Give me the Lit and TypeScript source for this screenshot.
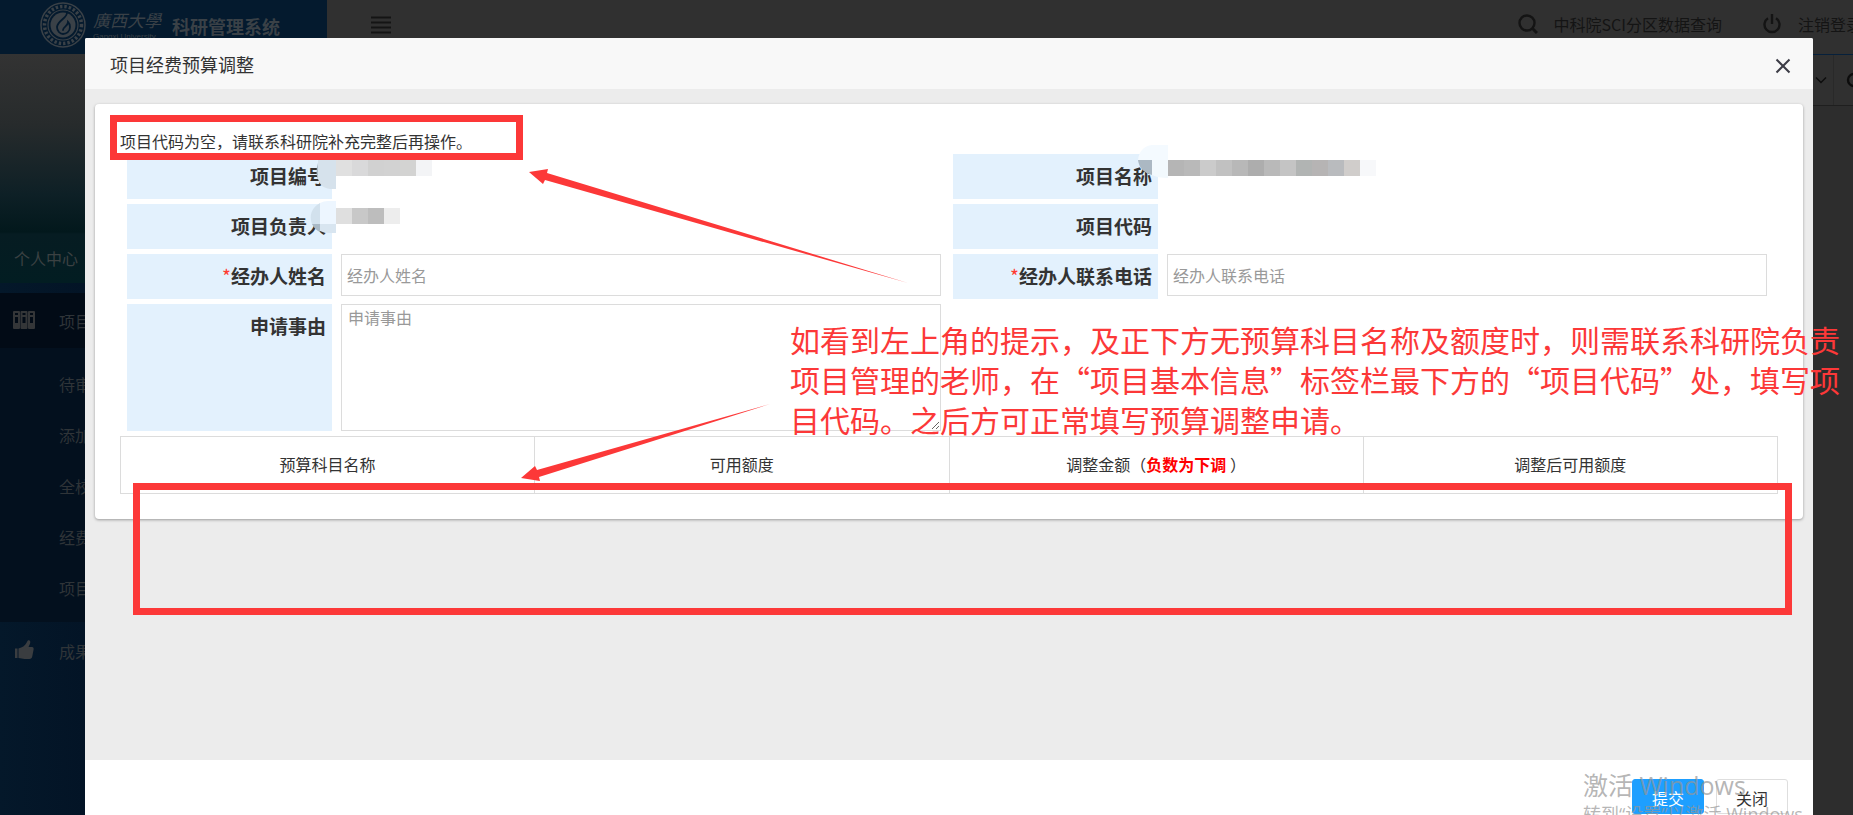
import { LitElement, html, css, svg, nothing } from "lit";
import { customElement } from "lit/decorators.js";

const CELL = 16;
const codeCells = ["#e0e0e0", "#d9d9da", "#d1d1d1", "#d2d2d2", "#d3d3d2", "#f3f4f6"];
const ownerCells = ["#dfdfdf", "#c8c8c8", "#bdbdbd", "#ededed"];
const nameCells = [
  "#b5b5b5", "#b9b9b9", "#cbcbcb", "#c1c1c1", "#b8b8b8", "#adadad", "#b9b9b9",
  "#c4c4c4", "#b1b4b3", "#b6b4b4", "#b9bbbe", "#d0cdcb", "#f7f8fa",
];

const mosaic = (x: number, y: number, cells: string[]) =>
  cells.map(
    (fill, i) => svg`<rect x=${x + i * CELL} y=${y} width=${CELL} height=${CELL} fill=${fill} />`
  );

@customElement("admin-shell")
class AdminShell extends LitElement {
  static styles = css`
    :host {
      display: flex;
      flex-direction: column;
      height: 100%;
      background: #2d2d2d;
      color: #454545;
      font-size: 16px;
    }
    .top {
      display: flex;
      height: 54px;
      flex: none;
      background: #303030;
      overflow: hidden;
    }
    .brand {
      display: flex;
      box-sizing: border-box;
      width: 327px;
      flex: none;
      padding: 2px 0 0 40px;
      background: #041a2e;
      color: #3a4147;
    }
    .seal {
      width: 46px;
      height: 46px;
      flex: none;
    }
    .school {
      display: flex;
      flex-direction: column;
      width: 70px;
      margin: 6px 0 0 7px;
      white-space: nowrap;
    }
    .school-cn {
      font: italic 17px/24px "Noto Sans CJK SC", sans-serif;
    }
    .school-en {
      font: 8px/10px "Liberation Sans", sans-serif;
    }
    .system {
      margin: 10px 0 0 9px;
      font-size: 18px;
      line-height: 28px;
      font-weight: 700;
    }
    .bar {
      display: flex;
      flex: 1;
      min-width: 0;
      padding-left: 44px;
      justify-content: space-between;
      color: #141414;
    }
    .burger {
      width: 20px;
      height: 18px;
      margin-top: 16px;
    }
    .links {
      display: flex;
      align-items: flex-start;
      margin-right: -9px;
      line-height: 24px;
      white-space: nowrap;
    }
    .links a {
      display: flex;
      margin: 12px 0 0 40px;
      gap: 16px;
      color: inherit;
      text-decoration: none;
    }
    .links svg {
      width: 20px;
      height: 20px;
      margin-top: 2px;
    }
    .main {
      display: flex;
      flex: 1;
      min-height: 0;
    }
    .side {
      width: 327px;
      flex: none;
      background: linear-gradient(90deg, #04182a, #031426 85px);
      color: #2f3438;
      line-height: 24px;
    }
    .cover {
      display: flex;
      box-sizing: border-box;
      height: 229px;
      padding: 0 0 13px 14px;
      align-items: flex-end;
      background: linear-gradient(180deg, #333333, #272b2c 70px, #0e2026 140px, #02181c 178px, #061c22 180px, #021d22);
      color: #3b4142;
    }
    .group {
      display: grid;
      grid-template-columns: 59px 1fr;
      align-items: center;
      height: 55px;
      margin-top: 10px;
      background: #020b16;
    }
    .group svg {
      width: 22px;
      height: 20px;
      margin: 0 0 2px 13px;
    }
    .plain {
      margin: 0;
      height: 58px;
      background: none;
    }
    .subs {
      display: grid;
      grid-auto-rows: 51px;
      align-items: center;
      margin: 0;
      padding: 10px 0 9px 59px;
      background: #03101e;
      list-style: none;
    }
    .work {
      flex: 1;
      min-width: 0;
      border-top: 1px solid #06203b;
    }
    .tabs {
      display: flex;
      height: 50px;
      justify-content: flex-end;
      align-items: center;
      border-bottom: 1px solid #1f1f1f;
      background: #303030;
      overflow: hidden;
    }
    .drop {
      display: flex;
      width: 24px;
      height: 50px;
      align-items: center;
      justify-content: center;
      border-right: 1px solid #292929;
    }
    .reload {
      width: 20px;
      height: 20px;
      margin: 0 -13px 0 12px;
      flex: none;
    }
  `;

  render() {
    return html`
      <header class="top">
        <div class="brand">
          <svg class="seal" viewBox="0 0 46 46" fill="none" stroke="#3a4147">
            <circle cx="23" cy="23" r="22" stroke-width="1.5" />
            <circle cx="23" cy="23" r="18.5" stroke-width="3.5" stroke-dasharray="2.4 2" />
            <circle cx="23" cy="23" r="15" stroke-width="1.2" />
            <circle cx="23" cy="23" r="12.5" fill="#3a4147" stroke="none" />
            <path d="M27 10c1 6-9 8-10 15 0 4 3 7 6 7s7-2 7-7c0-2-1-4-2-5 0 4-5 5-5 8" stroke="#041a2e" stroke-width="1.8" stroke-linecap="round" />
          </svg>
          <div class="school">
            <span class="school-cn">廣西大學</span>
            <span class="school-en">Gangxi University</span>
          </div>
          <span class="system">科研管理系统</span>
        </div>
        <div class="bar">
          <svg class="burger" viewBox="0 0 20 18" stroke="#141414" stroke-width="2">
            <path d="M0 1.5h20M0 6.5h20M0 11.5h20M0 16.5h20" />
          </svg>
          <nav class="links">
            <a href="#query">
              <svg viewBox="0 0 20 20" fill="none" stroke="#141414" stroke-width="2.4">
                <circle cx="9" cy="9" r="7.5" /><path d="M14 14l5 5" stroke-width="3" />
              </svg>中科院SCI分区数据查询</a>
            <a href="#logout">
              <svg viewBox="0 0 20 20" fill="none" stroke="#141414" stroke-width="2.4">
                <path d="M6 4.2a7.5 7.5 0 1 0 8 0M10 0v10" />
              </svg>注销登录</a>
          </nav>
        </div>
      </header>
      <div class="main">
        <aside class="side">
          <div class="cover">个人中心</div>
          <div class="group">
            <svg viewBox="0 0 22 20">
              <path fill="#343638" fill-rule="evenodd" d="M1 1h5q1 0 1 1v16q0 1-1 1H1q-1 0-1-1V2q0-1 1-1zM2 3v2h3V3zM2 7v6h3V7zM8.500 1h5q1 0 1 1v16q0 1-1 1h-5q-1 0-1-1V2q0-1 1-1zM9.500 3v2h3V3zM9.500 7v6h3V7zM16 1h5q1 0 1 1v16q0 1-1 1h-5q-1 0-1-1V2q0-1 1-1zM17 3v2h3V3zM17 7v6h3V7z" />
            </svg>项目管理
          </div>
          <ul class="subs">
            <li>待审项目</li>
            <li>添加项目</li>
            <li>全校项目</li>
            <li>经费管理</li>
            <li>项目变更</li>
          </ul>
          <div class="group plain">
            <svg viewBox="0 0 22 20" fill="#3a3d40">
              <path d="M2 8.500h2.500V18H2zM5.500 8.500c4-1 7-3 8.500-6.500.5-1.500 1-2 2-1.800 1.500.3 1.500 2 1 3.500L15.500 7H19c1.500 0 1.800 1 1.600 2.400l-1.300 6.800c-.3 1.800-1.300 2.800-2.800 2.800h-5c-2 0-3.500-.8-6-1z" />
            </svg>成果管理
          </div>
        </aside>
        <div class="work">
          <div class="tabs">
            <span class="drop">
              <svg width="12" height="8" viewBox="0 0 12 8" fill="none" stroke="#0c0c0c" stroke-width="1.4"><path d="M1 1.5l5 5 5-5" /></svg>
            </span>
            <svg class="reload" viewBox="0 0 20 20" fill="none" stroke="#0c0c0c" stroke-width="2.4"><path d="M12 4H8a6 6 0 0 0 0 12h4" /></svg>
          </div>
        </div>
      </div>
    `;
  }
}

@customElement("budget-dialog")
class BudgetDialog extends LitElement {
  static styles = css`
    :host {
      display: flex;
      flex-direction: column;
      flex: 1;
      min-width: 0;
      border-radius: 2px 2px 0 0;
      background: #ffffff;
      color: #333333;
      font-size: 16px;
      overflow: hidden;
    }
    .head {
      display: flex;
      height: 51px;
      flex: none;
      padding: 0 22px 0 25px;
      align-items: center;
      justify-content: space-between;
      background: #f8f8f8;
    }
    .title {
      margin: 0;
      font-size: 18px;
      line-height: 26px;
      font-weight: 400;
    }
    .close {
      display: flex;
      padding: 4px 0 0;
      border: 0;
      background: none;
    }
    .body {
      flex: 1;
      min-height: 0;
      padding: 15px 10px;
      background: #ececec;
    }
    .card {
      padding: 25px;
      border-radius: 4px;
      background: #ffffff;
      box-shadow: 0 1px 3px rgba(0, 0, 0, 0.35);
    }
    .tip {
      margin: 0;
      line-height: 25px;
    }
    .form {
      display: grid;
      grid-template-columns: 1fr 1fr;
      gap: 5px 12px;
      padding: 0 11px 0 7px;
    }
    .field {
      display: grid;
      grid-template-columns: 205px 1fr;
      column-gap: 9px;
      min-height: 45px;
    }
    .label {
      padding-right: 6px;
      background: #e3f1fd;
      font-size: 19px;
      line-height: 44px;
      font-weight: 700;
      text-align: right;
    }
    .star {
      color: #ff3b30;
      font-weight: 400;
    }
    .input {
      box-sizing: border-box;
      width: 100%;
      height: 42px;
      padding: 0 5px;
      border: 1px solid #dcdcdc;
      background: #ffffff;
      color: #333333;
      font: inherit;
      outline: none;
    }
    .area {
      display: block;
      height: 127px;
      padding: 0 6px;
      line-height: 24px;
      resize: vertical;
    }
    .input::placeholder {
      color: #999999;
    }
    .table {
      width: 100%;
      margin-top: 5px;
      border-collapse: collapse;
      table-layout: fixed;
    }
    .table th {
      height: 57px;
      padding: 0 0 2px;
      box-sizing: border-box;
      border: 1px solid #dcdcdc;
      line-height: 24px;
      font-weight: 400;
    }
    .warn {
      color: #ff0000;
    }
    .foot {
      display: flex;
      box-sizing: border-box;
      height: 55px;
      flex: none;
      padding: 19px 25px 0;
      justify-content: flex-end;
      gap: 12px;
    }
    .btn {
      width: 72px;
      height: 35px;
      padding: 2px 0 0;
      border: 1px solid #dedede;
      border-radius: 3px;
      background: #ffffff;
      color: #333333;
      font: inherit;
      line-height: 24px;
    }
    .primary {
      border-color: #1e9fff;
      background: #1e9fff;
      color: #ffffff;
    }
  `;

  private label(id: string, text: string, required = false) {
    return html`<label class="label" for=${id}>${required ? html`<span class="star">*</span>` : nothing}${text}</label>`;
  }

  render() {
    return html`
      <header class="head">
        <h1 class="title">项目经费预算调整</h1>
        <button class="close" aria-label="关闭窗口">
          <svg width="16" height="16" viewBox="0 0 16 16" fill="none" stroke="#3c3c46" stroke-width="2"><path d="M1.5 1.5l13 13M14.5 1.5l-13 13" /></svg>
        </button>
      </header>
      <div class="body">
        <section class="card">
          <p class="tip">项目代码为空，请联系科研院补充完整后再操作。</p>
          <div class="form">
            <div class="field">${this.label("no", "项目编号")}<output id="no"></output></div>
            <div class="field">${this.label("name", "项目名称")}<output id="name"></output></div>
            <div class="field">${this.label("owner", "项目负责人")}<output id="owner"></output></div>
            <div class="field">${this.label("code", "项目代码")}<output id="code"></output></div>
            <div class="field">${this.label("agent", "经办人姓名", true)}<input class="input" id="agent" placeholder="经办人姓名" /></div>
            <div class="field">${this.label("phone", "经办人联系电话", true)}<input class="input" id="phone" placeholder="经办人联系电话" /></div>
            <div class="field">${this.label("reason", "申请事由")}<textarea class="input area" id="reason" placeholder="申请事由"></textarea></div>
          </div>
          <table class="table">
            <thead>
              <tr>
                <th>预算科目名称</th>
                <th>可用额度</th>
                <th>调整金额（<b class="warn">负数为下调</b> ）</th>
                <th>调整后可用额度</th>
              </tr>
            </thead>
          </table>
        </section>
      </div>
      <footer class="foot">
        <button class="btn primary">提交</button>
        <button class="btn">关闭</button>
      </footer>
    `;
  }
}

@customElement("app-root")
class AppRoot extends LitElement {
  static styles = css`
    :host {
      display: block;
      position: relative;
      height: 100vh;
      overflow: hidden;
      font-family: "Noto Sans CJK SC", sans-serif;
    }
    .overlay {
      position: absolute;
      inset: 0;
      display: flex;
      padding: 38px 40px 0 85px;
    }
    .marks {
      position: absolute;
      top: 0;
      left: 0;
      pointer-events: none;
    }
    .note {
      position: absolute;
      top: 319px;
      left: 790px;
      margin: 0;
      color: #fc3838;
      font-size: 30px;
      line-height: 40px;
      white-space: nowrap;
      pointer-events: none;
    }
    .watermark {
      position: absolute;
      top: 768px;
      right: 40px;
      width: 230px;
      color: rgba(150, 150, 150, 0.7);
      font-family: "Open Sans", "Noto Sans CJK SC", sans-serif;
      font-size: 18px;
      line-height: 24px;
      white-space: nowrap;
      pointer-events: none;
    }
    .activate {
      font-size: 25px;
      line-height: 34px;
    }
  `;

  render() {
    return html`
      <admin-shell></admin-shell>
      <div class="overlay"><budget-dialog></budget-dialog></div>
      <svg class="marks" width="1853" height="815" viewBox="0 0 1853 815">
        <path d="M336 160v29h-6c-7-1-10-4-12-10v-19z" fill="#d6e2ec" />
        <path d="M318 163v17c-2-5-2-11 0-17z" fill="#a9b9c6" />
        ${mosaic(336, 160, codeCells)}
        <path d="M320 203v21h-8c-3-8-1-16 8-21z" fill="#d2e1ed" />
        <path d="M320 203q4-2 8-2h8v23h-16z" fill="#edf6ff" />
        <path d="M312 224h8v8q-5-2-8-8z" fill="#a9b9c6" />
        <path d="M320 224h16v9h-8q-4 0-8-2z" fill="#d8e5f0" />
        ${mosaic(336, 208, ownerCells)}
        <path d="M1138 160c1-9 6-14 14-15h16v15z" fill="#f4faff" />
        <path d="M1138 160h14v15c-8-2-13-7-14-15z" fill="#abb8c3" />
        <path d="M1152 160h16v18c-7 0-12-1-16-3z" fill="#f2f9fd" />
        ${mosaic(1168, 160, nameCells)}
        <g fill="none" stroke="#fc3838" stroke-width="7">
          <rect x="113.5" y="118.5" width="406" height="38" />
          <rect x="136.5" y="486.5" width="1652" height="125" />
        </g>
        <g fill="#fc3838">
          <path d="M529 172L548 169L547 173L908 283L545 180L543 184Z" />
          <path d="M521 478L535 466L537 470L770 404L539 477L540 481Z" />
        </g>
      </svg>
      <p class="note">
        如看到左上角的提示，及正下方无预算科目名称及额度时，则需联系科研院负责<br />
        项目管理的老师，在“项目基本信息”标签栏最下方的“项目代码”处，填写项<br />
        目代码。之后方可正常填写预算调整申请。
      </p>
      <div class="watermark">
        <div class="activate">激活 Windows</div>
        <div>转到“设置”以激活 Windows。</div>
      </div>
    `;
  }
}
